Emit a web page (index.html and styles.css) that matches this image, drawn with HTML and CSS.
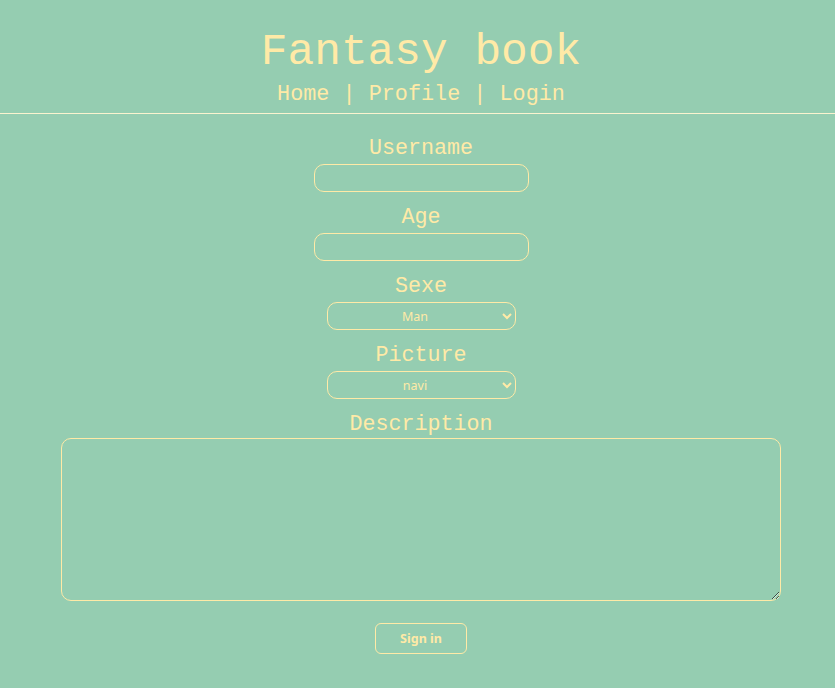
FILE: index.html
```html
<!DOCTYPE html>
<html lang="en">
<head>
<meta charset="utf-8">
<title>Fantasy book</title>
<link rel="stylesheet" href="styles.css">
</head>
<body>
<header class="header">
  <h1 class="title">Fantasy book</h1>
  <nav class="nav">Home | Profile | Login</nav>
</header>
<form class="form">
  <label class="label" for="username">Username</label>
  <input class="field" id="username" type="text">
  <label class="label" for="age">Age</label>
  <input class="field" id="age" type="text">
  <label class="label" for="sexe">Sexe</label>
  <select class="choice" id="sexe"><option>Man</option><option>Woman</option></select>
  <label class="label" for="picture">Picture</label>
  <select class="choice" id="picture"><option>navi</option></select>
  <label class="label" for="desc">Description</label>
  <textarea class="area" id="desc"></textarea>
  <button class="btn" type="button">Sign in</button>
</form>
</body>
</html>
```
FILE: styles.css
```css
html, body {
  margin: 0;
  padding: 0;
  background: #95cdb1;
}
body {
  color: #ffeaa7;
  font-family: "Liberation Mono", "DejaVu Sans Mono", monospace;
  min-height: 688px;
}
.header {
  text-align: center;
  padding-top: 27px;
  padding-bottom: 5px;
  padding-left: 7px;
  border-bottom: 1px solid #fbf3cf;
}
.title {
  margin: 0;
  font-size: 44.5px;
  line-height: 50px;
  font-weight: normal;
}
.nav {
  margin-top: 5px;
  font-size: 21.8px;
  line-height: 26px;
}
.form {
  display: flex;
  flex-direction: column;
  align-items: center;
  padding-top: 9px;
  padding-left: 7px;
}
.label {
  font-size: 21.7px;
  line-height: 26px;
  margin-top: 13px;
}
.field {
  box-sizing: border-box;
  width: 215px;
  height: 28px;
  margin-top: 2px;
  border: 1px solid #ffeaa7;
  border-radius: 10px;
  background: transparent;
  color: #ffeaa7;
  outline: none;
}
.choice {
  box-sizing: border-box;
  width: 189px;
  height: 28px;
  margin-top: 2px;
  border: 1px solid #ffeaa7;
  border-radius: 10px;
  background: transparent;
  color: #ffeaa7;
  font-family: "Noto Sans", "Open Sans", sans-serif;
  font-size: 12.5px;
  text-align: center;
  text-align-last: center;
}
.area {
  box-sizing: border-box;
  width: 720px;
  height: 163px;
  margin-top: 0;
  border: 1px solid #ffeaa7;
  border-radius: 10px;
  background: transparent;
  color: #ffeaa7;
  resize: both;
}
.btn {
  box-sizing: border-box;
  width: 92px;
  height: 31px;
  margin-top: 22px;
  border: 1px solid #ffeaa7;
  border-radius: 6px;
  background: transparent;
  color: #ffeaa7;
  font-family: "Noto Sans", "Open Sans", sans-serif;
  font-weight: bold;
  font-size: 12.5px;
}
```
